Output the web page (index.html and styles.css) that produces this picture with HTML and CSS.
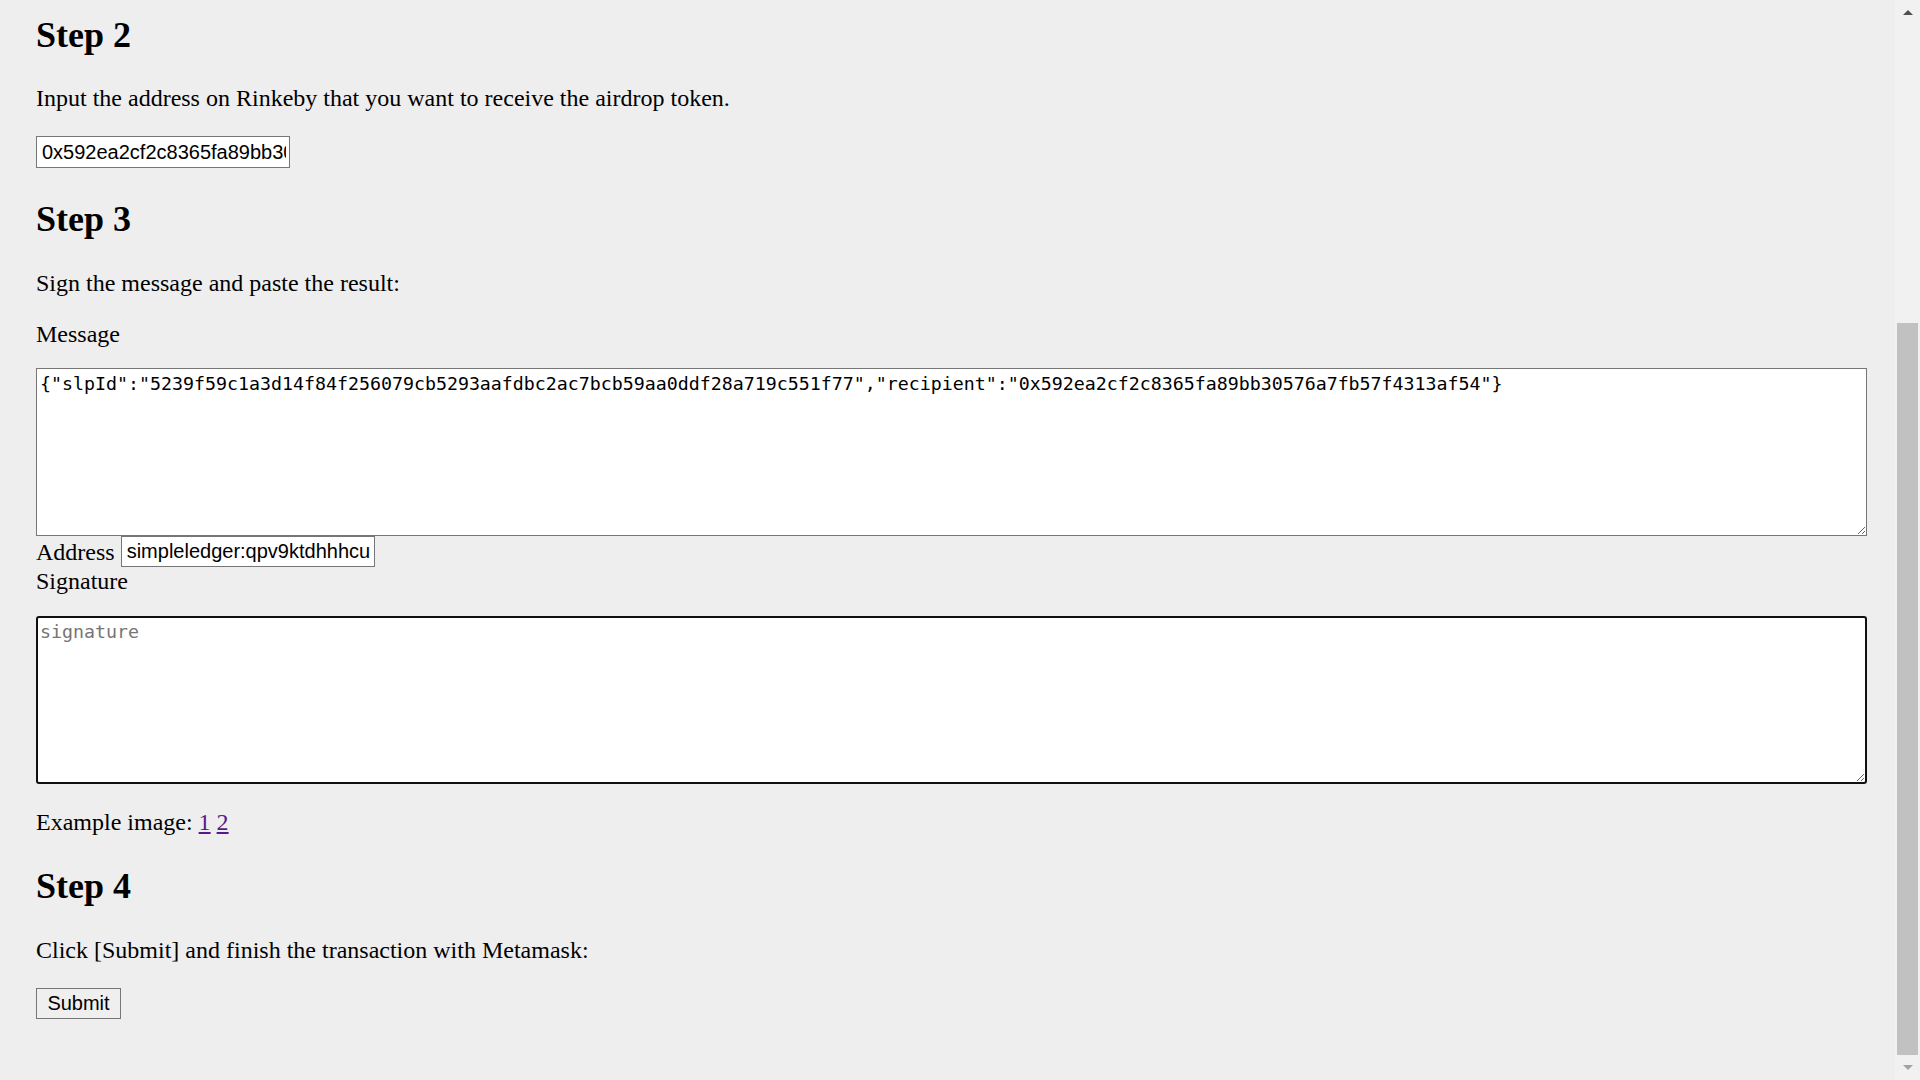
FILE: index.html
```html
<!DOCTYPE html>
<html lang="en">
<head>
<meta charset="utf-8">
<title>SLP Airdrop</title>
<link rel="stylesheet" href="styles.css">
</head>
<body>
<div class="window">
  <main class="page">
    <h2 class="step step-first">Step 2</h2>
    <p class="text">Input the address on Rinkeby that you want to receive the airdrop token.</p>
    <div class="field">
      <input class="box" type="text" value="0x592ea2cf2c8365fa89bb30576a7fb57f4313af54">
    </div>

    <h2 class="step step-mid">Step 3</h2>
    <p class="text text-gap">Sign the message and paste the result:</p>
    <p class="text text-label">Message</p>
    <textarea class="area area-message" readonly>{"slpId":"5239f59c1a3d14f84f256079cb5293aafdbc2ac7bcb59aa0ddf28a719c551f77","recipient":"0x592ea2cf2c8365fa89bb30576a7fb57f4313af54"}</textarea>
    <div class="addr-row">
      <span class="addr-label">Address</span>
      <input class="box box-tight" type="text" value="simpleledger:qpv9ktdhhhcu">
    </div>
    <div class="text sig-label">Signature</div>
    <textarea class="area area-sign" placeholder="signature"></textarea>
    <p class="text example">Example image: <a href="#1">1</a> <a href="#2">2</a></p>

    <h2 class="step step-last">Step 4</h2>
    <p class="text text-gap2">Click [Submit] and finish the transaction with Metamask:</p>
    <div class="actions">
      <button class="submit" type="button">Submit</button>
    </div>
  </main>

  <div class="scrollbar">
    <div class="sb-btn"><span class="arrow-up"></span></div>
    <div class="sb-track"><div class="sb-thumb"></div></div>
    <div class="sb-btn"><span class="arrow-down"></span></div>
  </div>
</div>
</body>
</html>
```

FILE: styles.css
```css
html, body {
  margin: 0;
  padding: 0;
  height: 100%;
  overflow: hidden;
}

body {
  background: #eeeeee;
  color: #000;
  font-family: "Liberation Serif", "Times New Roman", serif;
  font-size: 24px;
}

.window {
  display: flex;
  height: 1080px;
}

.page {
  flex: 1;
  min-width: 0;
  padding: 15px 28px 0 36px;
}

/* headings */
.step {
  margin: 30px 0 0;
  font-size: 36px;
  line-height: 41px;
  font-weight: bold;
}

.step-first {
  margin-top: 0;
}

.step-mid {
  margin-top: 31px;
}

/* paragraphs */
.text {
  margin: 0;
  line-height: 28px;
}

.step-first + .text {
  margin-top: 28px;
}

.text-gap {
  margin-top: 29px;
}

.text-label {
  margin-top: 23px;
}

.text-gap2 {
  margin-top: 29px;
}

.field {
  margin-top: 24px;
}

/* text inputs */
.box {
  display: block;
  box-sizing: border-box;
  width: 254px;
  height: 32px;
  margin: 0;
  padding: 0 3px 0 5px;
  border: 1px solid #767676;
  background: #fff;
  color: #000;
  font-family: "Liberation Sans", Arial, sans-serif;
  font-size: 20px;
}

.box-tight {
  height: 31px;
}

/* textareas */
.area {
  display: block;
  box-sizing: border-box;
  width: 100%;
  height: 168px;
  margin: 0;
  padding: 3px 3px;
  border: 1px solid #767676;
  background: #fff;
  color: #000;
  font-family: "DejaVu Sans Mono", "Liberation Mono", monospace;
  font-size: 18.27px;
  line-height: 23px;
  outline: none;
}

.area-message {
  margin-top: 20px;
}

.area-sign {
  margin-top: 21px;
  border: 2px solid #101010;
  border-radius: 3px;
  padding: 2px 2px;
}

.area::placeholder {
  color: #757575;
}

/* address row under the message */
.addr-row {
  display: flex;
  align-items: center;
  gap: 6px;
  height: 31px;
}

.addr-label {
  line-height: 28px;
}

.example {
  margin-top: 24px;
}

.example a {
  color: #551a8b;
}

.actions {
  margin-top: 24px;
}

.submit {
  box-sizing: border-box;
  height: 31px;
  width: 85px;
  margin: 0;
  padding: 0;
  border: 1px solid #767676;
  background: #efefef;
  color: #000;
  font-family: "Liberation Sans", Arial, sans-serif;
  font-size: 20px;
}

/* window scrollbar */
.scrollbar {
  width: 25px;
  flex: none;
  display: flex;
  flex-direction: column;
  background: #f1f1f1;
}

.sb-btn {
  height: 25px;
  flex: none;
  display: flex;
  align-items: center;
  justify-content: center;
}

.arrow-up {
  width: 0;
  height: 0;
  border-left: 5px solid transparent;
  border-right: 5px solid transparent;
  border-bottom: 5px solid #505050;
}

.arrow-down {
  width: 0;
  height: 0;
  border-left: 5px solid transparent;
  border-right: 5px solid transparent;
  border-top: 5px solid #a3a3a3;
}

.sb-track {
  flex: 1;
  display: flex;
  flex-direction: column;
  justify-content: flex-end;
}

.sb-thumb {
  height: 732px;
  margin: 0 2px;
  background: #c1c1c1;
}
```
